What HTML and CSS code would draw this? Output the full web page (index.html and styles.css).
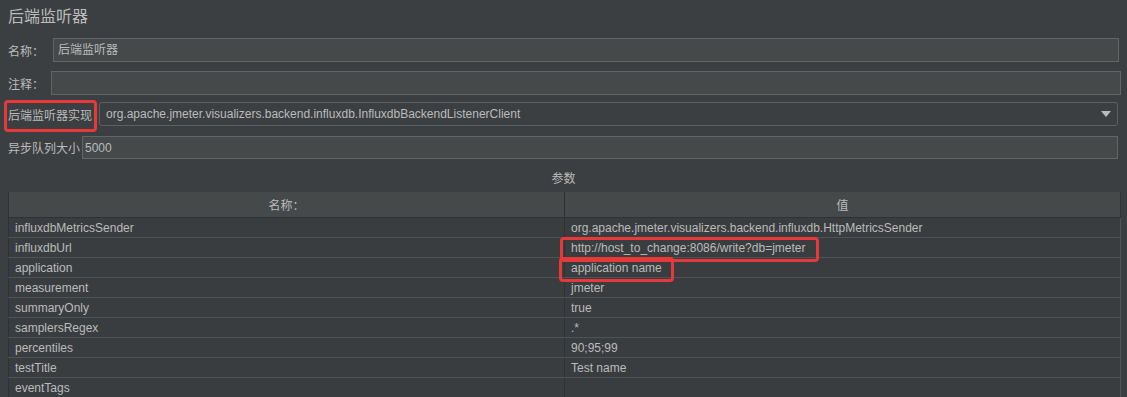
FILE: index.html
```html
<!DOCTYPE html>
<html lang="zh-CN">
<head>
<meta charset="UTF-8">
<title>后端监听器</title>
<link rel="stylesheet" href="styles.css">
</head>
<body>
  <h1 class="title">后端监听器</h1>

  <div class="field field-name">
    <label class="label">名称：</label>
    <div class="input">后端监听器</div>
  </div>

  <div class="field field-comment">
    <label class="label">注释：</label>
    <div class="input"></div>
  </div>

  <div class="field field-impl">
    <label class="label marked">后端监听器实现</label>
    <div class="combo">
      <span>org.apache.jmeter.visualizers.backend.influxdb.InfluxdbBackendListenerClient</span>
      <span class="arrow"></span>
    </div>
  </div>

  <div class="field field-queue">
    <label class="label">异步队列大小</label>
    <div class="input">5000</div>
  </div>

  <div class="caption">参数</div>

  <table class="params">
    <thead>
      <tr><th>名称：</th><th>值</th></tr>
    </thead>
    <tbody>
      <tr><td>influxdbMetricsSender</td><td>org.apache.jmeter.visualizers.backend.influxdb.HttpMetricsSender</td></tr>
      <tr><td>influxdbUrl</td><td><span class="marked url">http://host_to_change:8086/write?db=jmeter</span></td></tr>
      <tr><td>application</td><td><span class="marked app">application name</span></td></tr>
      <tr><td>measurement</td><td>jmeter</td></tr>
      <tr><td>summaryOnly</td><td>true</td></tr>
      <tr><td>samplersRegex</td><td>.*</td></tr>
      <tr><td>percentiles</td><td>90;95;99</td></tr>
      <tr><td>testTitle</td><td>Test name</td></tr>
      <tr><td>eventTags</td><td></td></tr>
    </tbody>
  </table>
</body>
</html>
```

FILE: styles.css
```css
body { margin: 0; background: #3c3f41; color: #bbbbbb; font-family: "Liberation Sans", "Noto Sans CJK SC", sans-serif; font-size: 12px; overflow: hidden; }
.title { margin: 0; padding: 6px 0 0 8px; height: 30px; font-size: 16px; font-weight: normal; line-height: 22px; }

.field { display: flex; align-items: center; height: 24px; }
.label { padding-left: 8px; white-space: nowrap; }
.input, .combo { box-sizing: border-box; height: 24px; background: #45494a; border: 1px solid #646464; padding: 0 4px; line-height: 22px; }
.field-name { margin-top: 2px; }
.field-name .label { width: 45px; }
.field-name .input { width: 1066px; }
.field-comment { margin-top: 9px; }
.field-comment .label { width: 43px; }
.field-comment .input { width: 1070px; }
.field-impl { margin-top: 7px; }
.field-impl .label { width: 91px; align-self: stretch; display: flex; align-items: center; }
.field-queue { margin-top: 10px; height: 23px; }
.field-queue .label { width: 74px; }
.field-queue .input { width: 1036px; height: 23px; padding-left: 2px; }

.combo { display: flex; align-items: center; justify-content: space-between; width: 1019px; background: #3c3f41; border-color: #5e6060; border-radius: 3px; padding: 0 6px; }
.arrow { width: 0; height: 0; border-left: 5px solid transparent; border-right: 5px solid transparent; border-top: 6px solid #bbbbbb; }

.marked { position: relative; }
.marked::before { content: ""; position: absolute; border: 3px solid #e8383a; border-radius: 4px; pointer-events: none; }
.label.marked::before { left: 4px; right: 2px; top: -2px; bottom: -6px; }
.url::before { left: -11px; right: -13px; top: -4px; bottom: -7px; }
.app::before { left: -12px; right: -12px; top: -4px; bottom: -7px; }

.caption { margin-top: 12px; height: 21px; text-align: center; line-height: 16px; }

.params { margin-left: 8px; width: 1113px; border-collapse: collapse; border-left: 1px solid #2f3133; table-layout: fixed; }
.params th { height: 25px; background: #45494a; font-weight: normal; border-bottom: 1px solid #2f3133; border-right: 1px solid #2f3133; padding: 0; }
.params th:first-child, .params td:first-child { width: 555px; }
.params td { height: 19px; padding: 0 0 0 6px; border-bottom: 1px solid #505355; border-right: 1px solid #505355; white-space: nowrap; background: #3a3d3f; }
.params td:first-child { border-right-color: #2f3133; }
```
